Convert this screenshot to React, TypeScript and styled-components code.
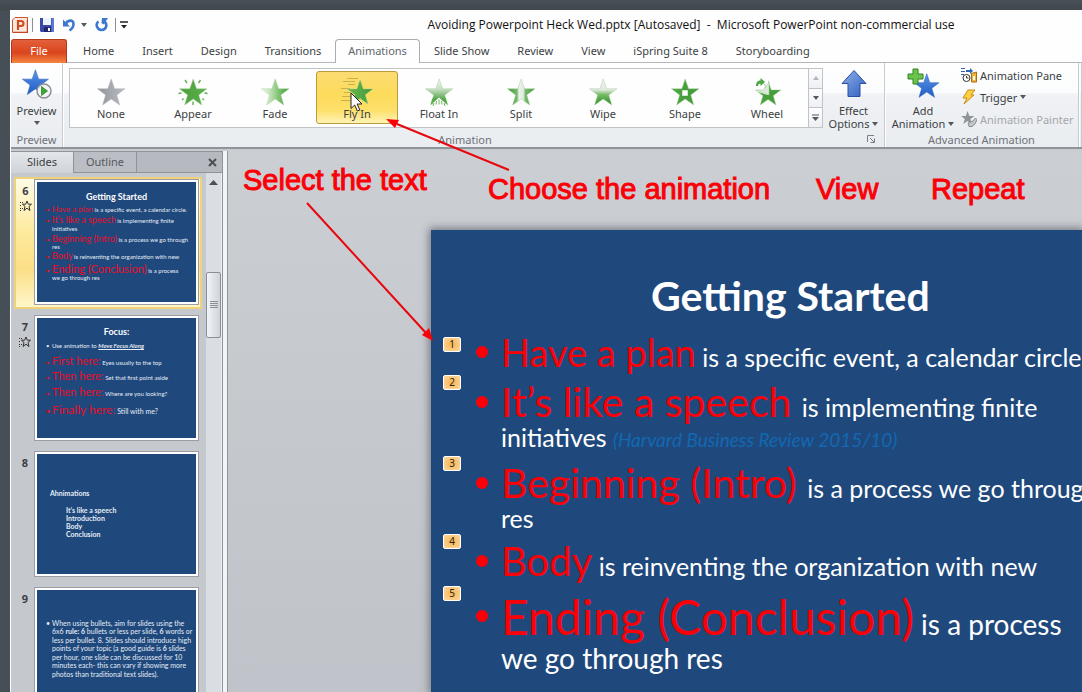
import React from 'react';
import styled, { createGlobalStyle, css } from 'styled-components';

const UI = '"Noto Sans", "Open Sans", "Liberation Sans", sans-serif';
const SLIDE = 'Lato, "Open Sans", sans-serif';
const NAVY = '#1f497d';
const RED = '#fb0007';

const GlobalStyle = createGlobalStyle`
  * { box-sizing: border-box; }
  body { margin: 0; background: #464f55; font-family: ${UI}; font-size: 11px; color: #3c3f43; }
  button { font: inherit; color: inherit; background: none; border: 0; padding: 0; margin: 0; }
  ol, ul, p, h1, h2 { margin: 0; padding: 0; list-style: none; font-weight: normal; }
  svg { display: block; flex: none; }
`;

const Desktop = styled.div`
  position: relative;
  height: 100vh;
  padding: 10px 0 0 10px;
  overflow: hidden;
  background: linear-gradient(#485157, #40484e 10px, #464f55 11px);
`;
const AppWindow = styled.div`
  height: 100%;
  display: flex;
  flex-direction: column;
  background: #fefefe;
  border-left: 1px solid #fff;
`;

/* Title bar */
const TitleBar = styled.header`
  flex: none;
  display: flex;
  align-items: center;
  height: 29px;
  padding: 0 12px 0 1px;
`;
const QuickAccess = styled.div`
  display: flex;
  align-items: center;
  width: 300px;
`;
const QuickButton = styled.button<{ $ml: number }>`
  margin-left: ${p => p.$ml}px;
`;
const Rule = styled.span<{ $ml: number }>`
  width: 1px;
  height: 14px;
  margin-left: ${p => p.$ml}px;
  background: #8b8e92;
`;
const WindowTitle = styled.h1`
  flex: 1;
  text-align: center;
  font-family: "Open Sans", ${UI};
  font-size: 12px;
  color: #111;
  white-space: pre;
`;

/* Tabs */
const TabBar = styled.nav`
  flex: none;
  display: flex;
  height: 24px;
  line-height: 16px;
  box-shadow: inset 0 -1px #b4b8bd;
`;
const FileTab = styled.button`
  width: 56px;
  margin-right: 2px;
  padding-bottom: 2px;
  color: #fff;
  border: 1px solid #b5391b;
  border-bottom: 0;
  border-radius: 3px 3px 0 0;
  background: linear-gradient(#e2613c, #dc4a22 45%, #d9441c 55%, #f58540);
`;
const Tab = styled.button<{ $active?: boolean }>`
  padding: 0 14px 1px;
  white-space: nowrap;
  ${p => p.$active && css`
    padding: 0 12px 2px;
    color: #62666c;
    background: #fefefe;
    border: 1px solid #a9adb2;
    border-bottom: 0;
    border-radius: 4px 4px 0 0;
  `}
`;

/* Ribbon */
const Ribbon = styled.div`
  flex: none;
  display: flex;
  height: 86px;
  border-bottom: 2px solid #8f949a;
  background: linear-gradient(#fefefe, #fbfcfd 35%, #f0f2f5 37%, #e9ecf0);
`;
const Group = styled.section<{ $w?: number }>`
  display: flex;
  flex-direction: column;
  min-width: 0;
  flex: ${p => (p.$w ? `0 0 ${p.$w}px` : '1 1 0')};
  border-right: 1px solid #c6cace;
  box-shadow: 1px 0 #fff;
`;
const GroupBody = styled.div`
  flex: 1;
  display: flex;
  min-height: 0;
`;
const GroupLabel = styled.div`
  display: flex;
  align-items: center;
  height: 16px;
  color: #6d7278;
  span { flex: 1; text-align: center; }
`;
const Launcher = styled.button`
  width: 14px;
  margin-right: 3px;
`;
const BigButton = styled.button<{ $w: number }>`
  display: flex;
  flex-direction: column;
  align-items: center;
  flex: 0 0 ${p => p.$w}px;
  padding-top: 5px;
  line-height: 13px;
  white-space: nowrap;
  span { display: flex; align-items: center; gap: 3px; }
  svg + span { margin-top: 4px; }
  span + svg { margin-top: 4px; }
`;
const Gallery = styled.div`
  flex: 1;
  display: flex;
  min-width: 0;
  height: 60px;
  margin: 5px 0 0 6px;
  background: #fefefe;
  border: 1px solid #c0c4c9;
`;
const GalleryItems = styled.div`
  flex: 1;
  display: flex;
  overflow: hidden;
`;
const GalleryItem = styled.button<{ $active?: boolean }>`
  display: flex;
  flex-direction: column;
  align-items: center;
  flex: 0 0 82px;
  height: 53px;
  margin-top: 2px;
  padding-top: 4px;
  border: 1px solid transparent;
  border-radius: 3px;
  line-height: 14px;
  ${p => p.$active && css`
    border-color: #b99a3c;
    background: linear-gradient(#fbdc71, #fddb5b 45%, #fde06a 75%, #fff3b5);
  `}
`;
const GalleryScroll = styled.div`
  display: flex;
  flex-direction: column;
  flex: 0 0 14px;
  border-left: 1px solid #c0c4c9;
`;
const ScrollStep = styled.button`
  flex: 1;
  display: flex;
  align-items: center;
  justify-content: center;
  background: linear-gradient(#fdfdfe, #eef0f3);
  & + & { border-top: 1px solid #c0c4c9; }
`;
const CommandList = styled.div`
  display: flex;
  flex-direction: column;
  padding-top: 1px;
`;
const Command = styled.button<{ $disabled?: boolean }>`
  display: flex;
  align-items: center;
  gap: 3px;
  height: 22px;
  white-space: nowrap;
  color: ${p => (p.$disabled ? '#a3a6aa' : 'inherit')};
`;

/* Workspace */
const Workspace = styled.div`
  flex: 1;
  display: flex;
  min-height: 0;
  padding-top: 2px;
  background: #c8cbd0;
`;
const SidePanel = styled.aside`
  flex: 0 0 211px;
  display: flex;
  flex-direction: column;
  min-height: 0;
  background: #c5c8cd;
`;
const PanelTabs = styled.div`
  flex: none;
  display: flex;
  height: 22px;
  border-top: 1px solid #8f949a;
`;
const PanelTab = styled.button<{ $w: number; $active?: boolean }>`
  flex: 0 0 ${p => p.$w}px;
  padding-bottom: 1px;
  border-right: 1px solid #8f949a;
  color: #55585c;
  ${p => (p.$active
    ? css`background: linear-gradient(#e3e6ea, #cfd2d7); color: #3c3f43; padding-bottom: 2px;`
    : css`border-bottom: 1px solid #8f949a; background: #bbbfc5;`)}
`;
const PanelClose = styled.div`
  flex: 1;
  display: flex;
  align-items: center;
  justify-content: flex-end;
  padding-right: 5px;
  background: #b6bac0;
  border-bottom: 1px solid #8f949a;
`;
const PanelBody = styled.div`
  flex: 1;
  display: flex;
  min-height: 0;
`;
const ThumbList = styled.ol`
  flex: 1;
  display: flex;
  flex-direction: column;
  gap: 4px;
  padding: 4px 4px 0 3px;
  overflow: hidden;
`;
const ThumbItem = styled.li<{ $active?: boolean }>`
  flex: none;
  display: flex;
  height: 132px;
  padding: 2px 3px 0 0;
  border: 1px solid transparent;
  ${p => p.$active && css`
    border: 2px solid #efd27a;
    padding: 1px 2px 0 0;
    background: linear-gradient(#fffbe6, #fdeb9f 40%, #fbdf86 70%, #fff6c9);
  `}
`;
const ThumbNumber = styled.div`
  flex: 1;
  display: flex;
  flex-direction: column;
  align-items: center;
  gap: 2px;
  padding-top: 4px;
  font-weight: bold;
  font-size: 11px;
  line-height: 14px;
`;
const Thumb = styled.div`
  flex: 0 0 163px;
  height: 124px;
  padding: 0 9px 0 9px;
  overflow: hidden;
  background: ${NAVY};
  border: 2px solid #fff;
  outline: 1px solid #9a9ea4;
  color: #e6ecf4;
  font-family: ${SLIDE};
  font-size: 6px;
  white-space: nowrap;
`;
const ThumbTitle = styled.h2<{ $top: number }>`
  padding-top: ${p => p.$top}px;
  font-size: 9px;
  line-height: 12px;
  font-weight: bold;
  text-align: center;
  color: #fff;
`;
const ThumbLine = styled.p<{ $h: number; $indent?: number; $bold?: boolean; $size?: number }>`
  padding-left: ${p => p.$indent ?? 6}px;
  line-height: ${p => p.$h}px;
  height: ${p => p.$h}px;
  font-size: ${p => p.$size ?? 6}px;
  font-weight: ${p => (p.$bold ? 'bold' : 'normal')};
`;
const ThumbDot = styled.span<{ $red?: boolean }>`
  display: inline-block;
  width: 6px;
  margin-left: -6px;
  color: ${p => (p.$red ? RED : 'inherit')};
`;
const ThumbKey = styled.span<{ $size: number }>`
  color: #ea0d28;
  font-size: ${p => p.$size}px;
`;
const PanelScroll = styled.div`
  flex: 0 0 16px;
  display: flex;
  flex-direction: column;
  align-items: center;
  padding-top: 7px;
  background: #d9dde4;
  border-right: 1px solid #eef0f3;
`;
const PanelThumb = styled.button`
  display: flex;
  align-items: center;
  justify-content: center;
  width: 15px;
  height: 66px;
  margin-top: 87px;
  border: 1px solid #8b9098;
  border-radius: 2px;
  background: linear-gradient(90deg, #f2f4f7, #cfd4dc);
`;
const Splitter = styled.div`
  flex: 0 0 6px;
  border-left: 1px solid #8f949a;
  border-right: 1px solid #8f949a;
  background: #f3f4f6;
`;
const Canvas = styled.main`
  flex: 1;
  min-width: 0;
  display: flex;
  padding: 79px 0 0 203px;
  overflow: hidden;
  background: linear-gradient(#cbced3, #c5c8cd 50%, #c0c3c9);
`;
const Slide = styled.article`
  flex: 1;
  min-width: 0;
  background: ${NAVY};
  box-shadow: 0 0 8px 2px #777b80;
  color: #fff;
  font-family: ${SLIDE};
  white-space: nowrap;
`;
const SlideTitle = styled.h2`
  padding: 42px 0 0 220px;
  font-size: 41px;
  line-height: 48px;
  font-weight: bold;
`;
const Points = styled.ol`
  display: flex;
  flex-direction: column;
  gap: 8px;
  padding-top: 11px;
`;
const Point = styled.li<{ $lead: number; $text?: number }>`
  position: relative;
  padding-left: 70px;
  font-size: ${p => p.$text ?? 25}px;
  line-height: 28px;
  p:first-of-type { line-height: ${p => p.$lead}px; height: ${p => p.$lead}px; }
`;
const Order = styled.span<{ $top: number }>`
  position: absolute;
  left: 12px;
  top: ${p => p.$top}px;
  width: 18px;
  height: 15px;
  border: 1px solid #fff;
  border-radius: 2px;
  background: radial-gradient(#f8b552, #fdd9a0);
  color: #2d2413;
  font: 10px/13px ${UI};
  text-align: center;
`;
const Dot = styled.span<{ $big?: boolean }>`
  display: inline-block;
  width: 12px;
  height: 12px;
  margin: 0 13px ${p => (p.$big ? 13 : 9)}px -25px;
  border-radius: 50%;
  background: ${RED};
`;
const Key = styled.span<{ $size: number }>`
  color: ${RED};
  font-size: ${p => p.$size}px;
`;
const Cite = styled.em`
  font-size: 19px;
  color: #1268b1;
`;

/* Callouts over the window */
const Callout = styled.span<{ $x: number; $y: number }>`
  position: absolute;
  left: ${p => p.$x}px;
  top: ${p => p.$y}px;
  font-family: "Liberation Sans", sans-serif;
  font-size: 29px;
  line-height: 32px;
  color: ${RED};
  -webkit-text-stroke: 1px ${RED};
  white-space: nowrap;
`;
const Arrows = styled.svg`
  position: absolute;
  left: 0;
  top: 0;
  pointer-events: none;
`;
const Pointer = styled.svg`
  position: absolute;
  left: 350px;
  top: 92px;
  pointer-events: none;
`;

const STAR = 'M16 2 L19.6 12.4 L30.5 12.4 L21.9 19 L25 29.5 L16 23.2 L7 29.5 L10.1 19 L1.5 12.4 L12.4 12.4 Z';

type StarKind = 'none' | 'appear' | 'fade' | 'fly' | 'float' | 'split' | 'wipe' | 'shape' | 'wheel';
const STOPS: Record<StarKind, { stops: [number, string][]; vertical?: boolean }> = {
  none: { stops: [[0, '#8e9299'], [0.45, '#a4a7ad'], [1, '#b9bbc0']] },
  appear: { stops: [[0, '#4aa03c'], [1, '#5cb04c']] },
  fade: { stops: [[0, '#fbfdfb'], [0.45, '#a5d59a'], [0.8, '#5db04e'], [1, '#3c9431']] },
  fly: { stops: [[0, '#6cb851'], [1, '#3d9b36']] },
  float: { stops: [[0, '#f4f7f3'], [0.4, '#c5dec0'], [0.8, '#4fa345'], [1, '#6bb35f']], vertical: true },
  split: { stops: [[0, '#3b9532'], [0.35, '#79b96e'], [0.42, '#eef2ed'], [0.58, '#e0eadf'], [0.65, '#79b96e'], [1, '#3b9532']] },
  wipe: { stops: [[0, '#f1f3f1'], [0.42, '#dfe8dd'], [0.6, '#74bc66'], [1, '#2f8b29']], vertical: true },
  shape: { stops: [[0, '#4fa543'], [1, '#3f9a36']] },
  wheel: { stops: [[0, '#4fa543'], [1, '#3f9a36']] },
};

const STAR_PLACE: Partial<Record<StarKind, string>> = {
  fly: 'translate(5 2) scale(.88)',
  wheel: 'translate(3 3) scale(.88)',
};

function StarIcon({ kind }: { kind: StarKind }) {
  const g = STOPS[kind];
  const id = `star-${kind}`;
  return (
    <svg width="32" height="31" viewBox="0 0 32 31" aria-hidden="true">
      <defs>
        <linearGradient id={id} x1="0" y1="0" x2={g.vertical ? 0 : 1} y2={g.vertical ? 1 : 0}>
          {g.stops.map(([o, c]) => <stop key={o} offset={o} stopColor={c} />)}
        </linearGradient>
      </defs>
      {kind === 'fly' && (
        <path d="M6 2.500h11M2 5.500h12M7 8.500h7M0 12.500h9M3 16.500h7M1 20.500h9M0 24.500h9" stroke="#b5a94a" strokeWidth=".8" />
      )}
      <path d={STAR} transform={STAR_PLACE[kind] ?? 'translate(1 1) scale(.95)'}
        fill={`url(#${id})`} stroke={kind === 'none' ? '#b0b3b8' : '#a5cf9e'} strokeWidth=".5" />
      {kind === 'appear' && (
        <path d="M8 4l2 3M23.500 4l-2 3M1.500 17.500l3-.5M27.500 17l3 .5M16 25.500v3.500M5 24l1.500-1.500M27 24l-1.500-1.500" stroke="#5fae52" strokeWidth="1.400" />
      )}
      {kind === 'float' && (
        <>
          <path d="M16 21.500l6 5.500v3H10v-3z" fill="#fff" />
          <path d="M7.500 28.500l2-6 3 1.500zM24.500 28.500l-2-6-3 1.500z" fill="#58a84c" />
          <path d="M16 23.500v5M13.500 25l-.5 3.500M18.500 25l.5 3.500M11 27l-1 3M21 27l1 3" stroke="#6fb463" strokeWidth="1" />
        </>
      )}
      {kind === 'shape' && <path d="M13.500 14.500h5v5h-5z" fill="#fff" stroke="#cfe8ca" />}
      {kind === 'wheel' && (
        <>
          <path d="M17 0v19L7 16 1 11 3 0z" fill="#fff" />
          <path d="M18 6v13L5 14h8z" fill="#dcebd9" stroke="#a9cfa2" strokeWidth=".6" />
          <path d="M5 10c0-4 2-5.500 4.500-5.500V2l4.500 4-4.500 4V7.500C8 7.500 7 8.500 7 10z" fill="#4fa543" />
          <path d="M13 12c2 .5 2-3 0-4" fill="none" stroke="#a9cfa2" />
        </>
      )}
    </svg>
  );
}

const Caret = ({ up }: { up?: boolean }) => (
  <svg width="6" height="4" viewBox="0 0 6 4" aria-hidden="true">
    <path d={up ? 'M0 4L3 0L6 4Z' : 'M0 0L3 4L6 0Z'} fill={up ? '#b3b6ba' : '#55585c'} />
  </svg>
);

const BlueStar = ({ mode }: { mode: 'preview' | 'add' }) => (
  <svg width="32" height="32" viewBox="0 0 32 32" aria-hidden="true">
    <defs>
      <linearGradient id={`blue-${mode}`} x1="0" y1="0" x2="0" y2="1">
        <stop offset="0" stopColor="#5b95ea" /><stop offset="1" stopColor="#1f5bc4" />
      </linearGradient>
    </defs>
    <path d={STAR} fill={`url(#blue-${mode})`} stroke="#2a5fb8" strokeWidth=".6"
      transform={mode === 'preview' ? 'translate(0 0) scale(.9)' : 'translate(6 4) scale(.86)'} />
    {mode === 'preview' ? (
      <>
        <circle cx="23" cy="23" r="7" fill="#f3f4f6" stroke="#8b9098" strokeWidth="1.500" />
        <path d="M20.500 18.500v9l6-4.500z" fill="#3fa535" stroke="#2a7a24" strokeWidth=".7" />
      </>
    ) : (
      <path d="M6 1h5v5h5v5h-5v5H6v-5H1V6h5z" fill="#6cc24a" stroke="#2c8424" />
    )}
  </svg>
);

const AnimatedMark = () => (
  <svg width="12" height="12" viewBox="0 0 12 12" aria-hidden="true">
    <path d="M7 1l1.300 3.200h3.200L9 6.500l1 4-3-2.300-3 2.300 1-4-2.500-2.300h3.200z" fill="none" stroke="#333" />
    <path d="M0 2.500h4M0 5.500h2M0 8.500h3M0 10.500h2" stroke="#333" strokeDasharray="1 1" />
  </svg>
);

const GALLERY: [string, StarKind][] = [
  ['None', 'none'], ['Appear', 'appear'], ['Fade', 'fade'], ['Fly In', 'fly'], ['Float In', 'float'],
  ['Split', 'split'], ['Wipe', 'wipe'], ['Shape', 'shape'], ['Wheel', 'wheel'],
];
const TABS = ['Home', 'Insert', 'Design', 'Transitions', 'Animations', 'Slide Show', 'Review', 'View', 'iSpring Suite 8', 'Storyboarding'];

function Toolbar() {
  return (
    <TitleBar>
      <QuickAccess>
        <svg width="16" height="16" viewBox="0 0 16 16" aria-hidden="true">
          <path d="M3 .5h12.500v15H.5V3z" fill="#fbe9e0" stroke="#d0532c" />
          <path d="M1 15.500h14.500V3" fill="none" stroke="#c8451f" strokeWidth="1.500" />
          <path d="M6 13V4h3a2.500 2.500 0 0 1 0 5H6" fill="none" stroke="#d24a20" strokeWidth="2.200" />
        </svg>
        <Rule $ml={4} />
        <QuickButton $ml={7} aria-label="Save">
          <svg width="14" height="14" viewBox="0 0 14 14">
            <path d="M0 0h14v14H1L0 13z" fill="#3a49a8" /><path d="M3 0h8v7H3z" fill="#eef2fb" />
            <path d="M11.500 0H14v14h-2.500z" fill="#5b79d6" /><path d="M4 9h7v5H4z" fill="#20286b" /><path d="M8 10h2v3H8z" fill="#fff" />
          </svg>
        </QuickButton>
        <QuickButton $ml={9} aria-label="Undo">
          <svg width="13" height="14" viewBox="0 0 13 14">
            <path d="M3 6C4 2 10.500 1 10.500 6c0 3-1.500 5-4 6.500" fill="none" stroke="#3c78cf" strokeWidth="2.600" />
            <path d="M0 1.500v7h7z" fill="#3c78cf" />
          </svg>
        </QuickButton>
        <QuickButton $ml={5} aria-label="Undo history"><Caret /></QuickButton>
        <QuickButton $ml={8} aria-label="Repeat">
          <svg width="13" height="14" viewBox="0 0 13 14">
            <path d="M3.500 3.500C0 6 2 12 6.500 12s6.500-5 3-8.500" fill="none" stroke="#3c78cf" strokeWidth="2.600" />
            <path d="M7 0h6L8.500 6.500 6.500 5z" fill="#3c78cf" />
          </svg>
        </QuickButton>
        <Rule $ml={7} />
        <QuickButton $ml={4} aria-label="Customize toolbar">
          <svg width="8" height="8" viewBox="0 0 8 8"><path d="M0 1h8" stroke="#222" strokeWidth="1.500" /><path d="M1 4h6L4 7.500z" fill="#222" /></svg>
        </QuickButton>
      </QuickAccess>
      <WindowTitle>Avoiding Powerpoint Heck Wed.pptx [Autosaved]  -  Microsoft PowerPoint non-commercial use</WindowTitle>
    </TitleBar>
  );
}

function RibbonBar() {
  return (
    <Ribbon>
      <Group $w={52}>
        <GroupBody>
          <BigButton $w={51}>
            <BlueStar mode="preview" /><span>Preview</span><Caret />
          </BigButton>
        </GroupBody>
        <GroupLabel><span>Preview</span></GroupLabel>
      </Group>
      <Group>
        <GroupBody>
          <Gallery>
            <GalleryItems>
              {GALLERY.map(([label, kind]) => (
                <GalleryItem key={label} $active={kind === 'fly'}>
                  <StarIcon kind={kind} />{label}
                </GalleryItem>
              ))}
            </GalleryItems>
            <GalleryScroll>
              <ScrollStep aria-label="Previous row"><Caret up /></ScrollStep>
              <ScrollStep aria-label="Next row"><Caret /></ScrollStep>
              <ScrollStep aria-label="More">
                <svg width="7" height="7" viewBox="0 0 7 7"><path d="M0 1h7" stroke="#55585c" /><path d="M0 3h7L3.500 7z" fill="#55585c" /></svg>
              </ScrollStep>
            </GalleryScroll>
          </Gallery>
          <BigButton $w={61}>
            <svg width="30" height="32" viewBox="0 0 30 32" aria-hidden="true">
              <defs><linearGradient id="up" x1="0" y1="0" x2="1" y2="1"><stop offset="0" stopColor="#8fb0ea" /><stop offset="1" stopColor="#2f5fc0" /></linearGradient></defs>
              <path d="M15 2.500L27 15.500H21V28.500H9V15.500H3Z" fill="url(#up)" stroke="#2c4fa0" />
            </svg>
            <span>Effect</span><span>Options <Caret /></span>
          </BigButton>
        </GroupBody>
        <GroupLabel>
          <span>Animation</span>
          <Launcher aria-label="Animation settings">
            <svg width="8" height="8" viewBox="0 0 8 8"><path d="M.5 7V.5H7M3 3l4 4M7.500 3.500v4h-4" fill="none" stroke="#7a7f86" /></svg>
          </Launcher>
        </GroupLabel>
      </Group>
      <Group $w={194}>
        <GroupBody>
          <BigButton $w={76}>
            <BlueStar mode="add" /><span>Add</span><span>Animation <Caret /></span>
          </BigButton>
          <CommandList>
            <Command>
              <svg width="16" height="16" viewBox="0 0 16 16" aria-hidden="true">
                <path d="M0 1.500h4M0 4.500h4M0 7.500h3" stroke="#2d62b5" /><path d="M5 3h4V1l3 3-3 3V5H5z" fill="#2d62b5" />
                <circle cx="5.500" cy="11" r="3.500" fill="#fff" stroke="#333" /><path d="M5.500 9v2h2" fill="none" stroke="#333" />
                <path d="M10.500 6.500l5-1.500v10h-5z" fill="#f3b33a" stroke="#a56d12" /><path d="M12 9h2v4h-2z" fill="#fff" />
              </svg>
              Animation Pane
            </Command>
            <Command>
              <svg width="16" height="16" viewBox="0 0 16 16" aria-hidden="true">
                <path d="M7 1h7L10 6h3L3 15l3-6H2z" fill="#fbd13d" stroke="#c98a1a" />
              </svg>
              Trigger <Caret />
            </Command>
            <Command $disabled>
              <svg width="16" height="16" viewBox="0 0 32 32" aria-hidden="true">
                <path d={STAR} fill="#8f9399" transform="translate(-2 -2) scale(.95)" /><path d="M14 24l10-4 5-6 3 3-4 9-6 5h-6z" fill="#c3c6ca" stroke="#8a8e94" strokeWidth="2" />
              </svg>
              Animation Painter
            </Command>
          </CommandList>
        </GroupBody>
        <GroupLabel><span>Advanced Animation</span></GroupLabel>
      </Group>
      <Group $w={3} />
    </Ribbon>
  );
}

function Thumbnails() {
  return (
    <ThumbList>
      <ThumbItem $active>
        <ThumbNumber>6<AnimatedMark /></ThumbNumber>
        <Thumb>
          <ThumbTitle $top={9}>Getting Started</ThumbTitle>
          <ThumbLine $h={12}><ThumbDot $red>•</ThumbDot><ThumbKey $size={8}>Have a plan</ThumbKey> is a specific event, a calendar circle.</ThumbLine>
          <ThumbLine $h={10}><ThumbDot $red>•</ThumbDot><ThumbKey $size={9}>It’s like a speech</ThumbKey> is implementing finite</ThumbLine>
          <ThumbLine $h={8}>initiatives</ThumbLine>
          <ThumbLine $h={11}><ThumbDot $red>•</ThumbDot><ThumbKey $size={9}>Beginning (Intro)</ThumbKey> is a process we go through</ThumbLine>
          <ThumbLine $h={5}>res</ThumbLine>
          <ThumbLine $h={14}><ThumbDot $red>•</ThumbDot><ThumbKey $size={9}>Body</ThumbKey> is reinventing the organization with new</ThumbLine>
          <ThumbLine $h={11}><ThumbDot $red>•</ThumbDot><ThumbKey $size={11}>Ending (Conclusion)</ThumbKey> is a process</ThumbLine>
          <ThumbLine $h={8}>we go through res</ThumbLine>
        </Thumb>
      </ThumbItem>
      <ThumbItem>
        <ThumbNumber>7<AnimatedMark /></ThumbNumber>
        <Thumb>
          <ThumbTitle $top={8}>Focus:</ThumbTitle>
          <ThumbLine $h={16}><ThumbDot>•</ThumbDot>Use animation to <b><i><u>Move Focus Along</u></i></b></ThumbLine>
          <ThumbLine $h={13}><ThumbDot $red>•</ThumbDot><ThumbKey $size={11}>First here:</ThumbKey> Eyes usually to the top</ThumbLine>
          <ThumbLine $h={17}><ThumbDot $red>•</ThumbDot><ThumbKey $size={11}>Then here:</ThumbKey> Set that first point aside</ThumbLine>
          <ThumbLine $h={16}><ThumbDot $red>•</ThumbDot><ThumbKey $size={11}>Then here:</ThumbKey> Where are you looking?</ThumbLine>
          <ThumbLine $h={20} $size={7}><ThumbDot $red>•</ThumbDot><ThumbKey $size={12}>Finally here:</ThumbKey> Still with me?</ThumbLine>
        </Thumb>
      </ThumbItem>
      <ThumbItem>
        <ThumbNumber>8</ThumbNumber>
        <Thumb>
          <ThumbTitle $top={22}>&nbsp;</ThumbTitle>
          <ThumbLine $h={10} $indent={4} $size={7} $bold>Ahnimations</ThumbLine>
          <ThumbLine $h={8}>&nbsp;</ThumbLine>
          {['It’s like a speech', 'Introduction', 'Body', 'Conclusion'].map(t => (
            <ThumbLine key={t} $h={8} $indent={20} $size={7} $bold>{t}</ThumbLine>
          ))}
        </Thumb>
      </ThumbItem>
      <ThumbItem>
        <ThumbNumber>9</ThumbNumber>
        <Thumb>
          <ThumbTitle $top={17}>&nbsp;</ThumbTitle>
          <ThumbLine $h={8} $size={7}><ThumbDot>•</ThumbDot>When using bullets, aim for slides using the</ThumbLine>
          <ThumbLine $h={9} $size={7}>6x6 <b>rule: 6</b> bullets or less per slide, <b>6</b> words or</ThumbLine>
          <ThumbLine $h={8} $size={7}>less per bullet. 8. Slides should introduce high</ThumbLine>
          <ThumbLine $h={9} $size={7}>points of your topic (a good guide is <b>6</b> slides</ThumbLine>
          <ThumbLine $h={8} $size={7}>per hour, one slide can be discussed for 10</ThumbLine>
          <ThumbLine $h={9} $size={7}>minutes each- this can vary if showing more</ThumbLine>
          <ThumbLine $h={8} $size={7}>photos than traditional text slides).</ThumbLine>
        </Thumb>
      </ThumbItem>
    </ThumbList>
  );
}

function MainSlide() {
  return (
    <Slide>
      <SlideTitle>Getting Started</SlideTitle>
      <Points>
        <Point $lead={42}>
          <Order $top={6}>1</Order>
          <p><Dot /><Key $size={38}>Have a plan</Key> is a specific event, a calendar circle.</p>
        </Point>
        <Point $lead={42}>
          <Order $top={-6}>2</Order>
          <p><Dot /><Key $size={41}>It’s like a speech </Key>is implementing finite</p>
          <p>initiatives <Cite>(Harvard Business Review 2015/10)</Cite></p>
        </Point>
        <Point $lead={42}>
          <Order $top={-6}>3</Order>
          <p><Dot /><Key $size={41}>Beginning (Intro) </Key>is a process we go through</p>
          <p>res</p>
        </Point>
        <Point $lead={42}>
          <Order $top={-6}>4</Order>
          <p><Dot /><Key $size={40}>Body</Key> is reinventing the organization with new</p>
        </Point>
        <Point $lead={54} $text={28}>
          <Order $top={-4}>5</Order>
          <p><Dot $big /><Key $size={48}>Ending (Conclusion)</Key> is a process</p>
          <p>we go through res</p>
        </Point>
      </Points>
    </Slide>
  );
}

export default function App() {
  return (
    <Desktop>
      <GlobalStyle />
      <AppWindow>
        <Toolbar />
        <TabBar>
          <FileTab>File</FileTab>
          {TABS.map(t => <Tab key={t} $active={t === 'Animations'}>{t}</Tab>)}
        </TabBar>
        <RibbonBar />
        <Workspace>
          <SidePanel>
            <PanelTabs>
              <PanelTab $w={63} $active>Slides</PanelTab>
              <PanelTab $w={63}>Outline</PanelTab>
              <PanelClose>
                <button aria-label="Close panel">
                  <svg width="9" height="9" viewBox="0 0 9 9"><path d="M1 1l7 7M8 1L1 8" stroke="#4c4f54" strokeWidth="2" /></svg>
                </button>
              </PanelClose>
            </PanelTabs>
            <PanelBody>
              <Thumbnails />
              <PanelScroll>
                <svg width="9" height="5" viewBox="0 0 9 5"><path d="M0 5L4.500 0L9 5z" fill="#4c4f54" /></svg>
                <PanelThumb aria-label="Scroll thumb">
                  <svg width="8" height="8" viewBox="0 0 8 8"><path d="M0 .5h8M0 2.500h8M0 4.500h8M0 6.500h8" stroke="#8b9098" /></svg>
                </PanelThumb>
              </PanelScroll>
            </PanelBody>
          </SidePanel>
          <Splitter />
          <Canvas><MainSlide /></Canvas>
        </Workspace>
      </AppWindow>
      <Callout $x={243} $y={164}>Select the text</Callout>
      <Callout $x={488} $y={173}>Choose the animation</Callout>
      <Callout $x={816} $y={173}>View</Callout>
      <Callout $x={931} $y={173}>Repeat</Callout>
      <Arrows width="520" height="350" viewBox="0 0 520 350" aria-hidden="true">
        <path d="M307 203L426 333M509 170L397 124" stroke="#e8070d" strokeWidth="2" />
        <path d="M433 341L422 335L429 328Z M386 119L399 120L395 128Z" fill="#fb0007" />
      </Arrows>
      <Pointer width="14" height="21" viewBox="0 0 14 21" aria-hidden="true">
        <path d="M1 1v15.500l3.700-3.500 2.600 6 2.500-1-2.600-6H12z" fill="#fff" stroke="#222" />
      </Pointer>
    </Desktop>
  );
}
